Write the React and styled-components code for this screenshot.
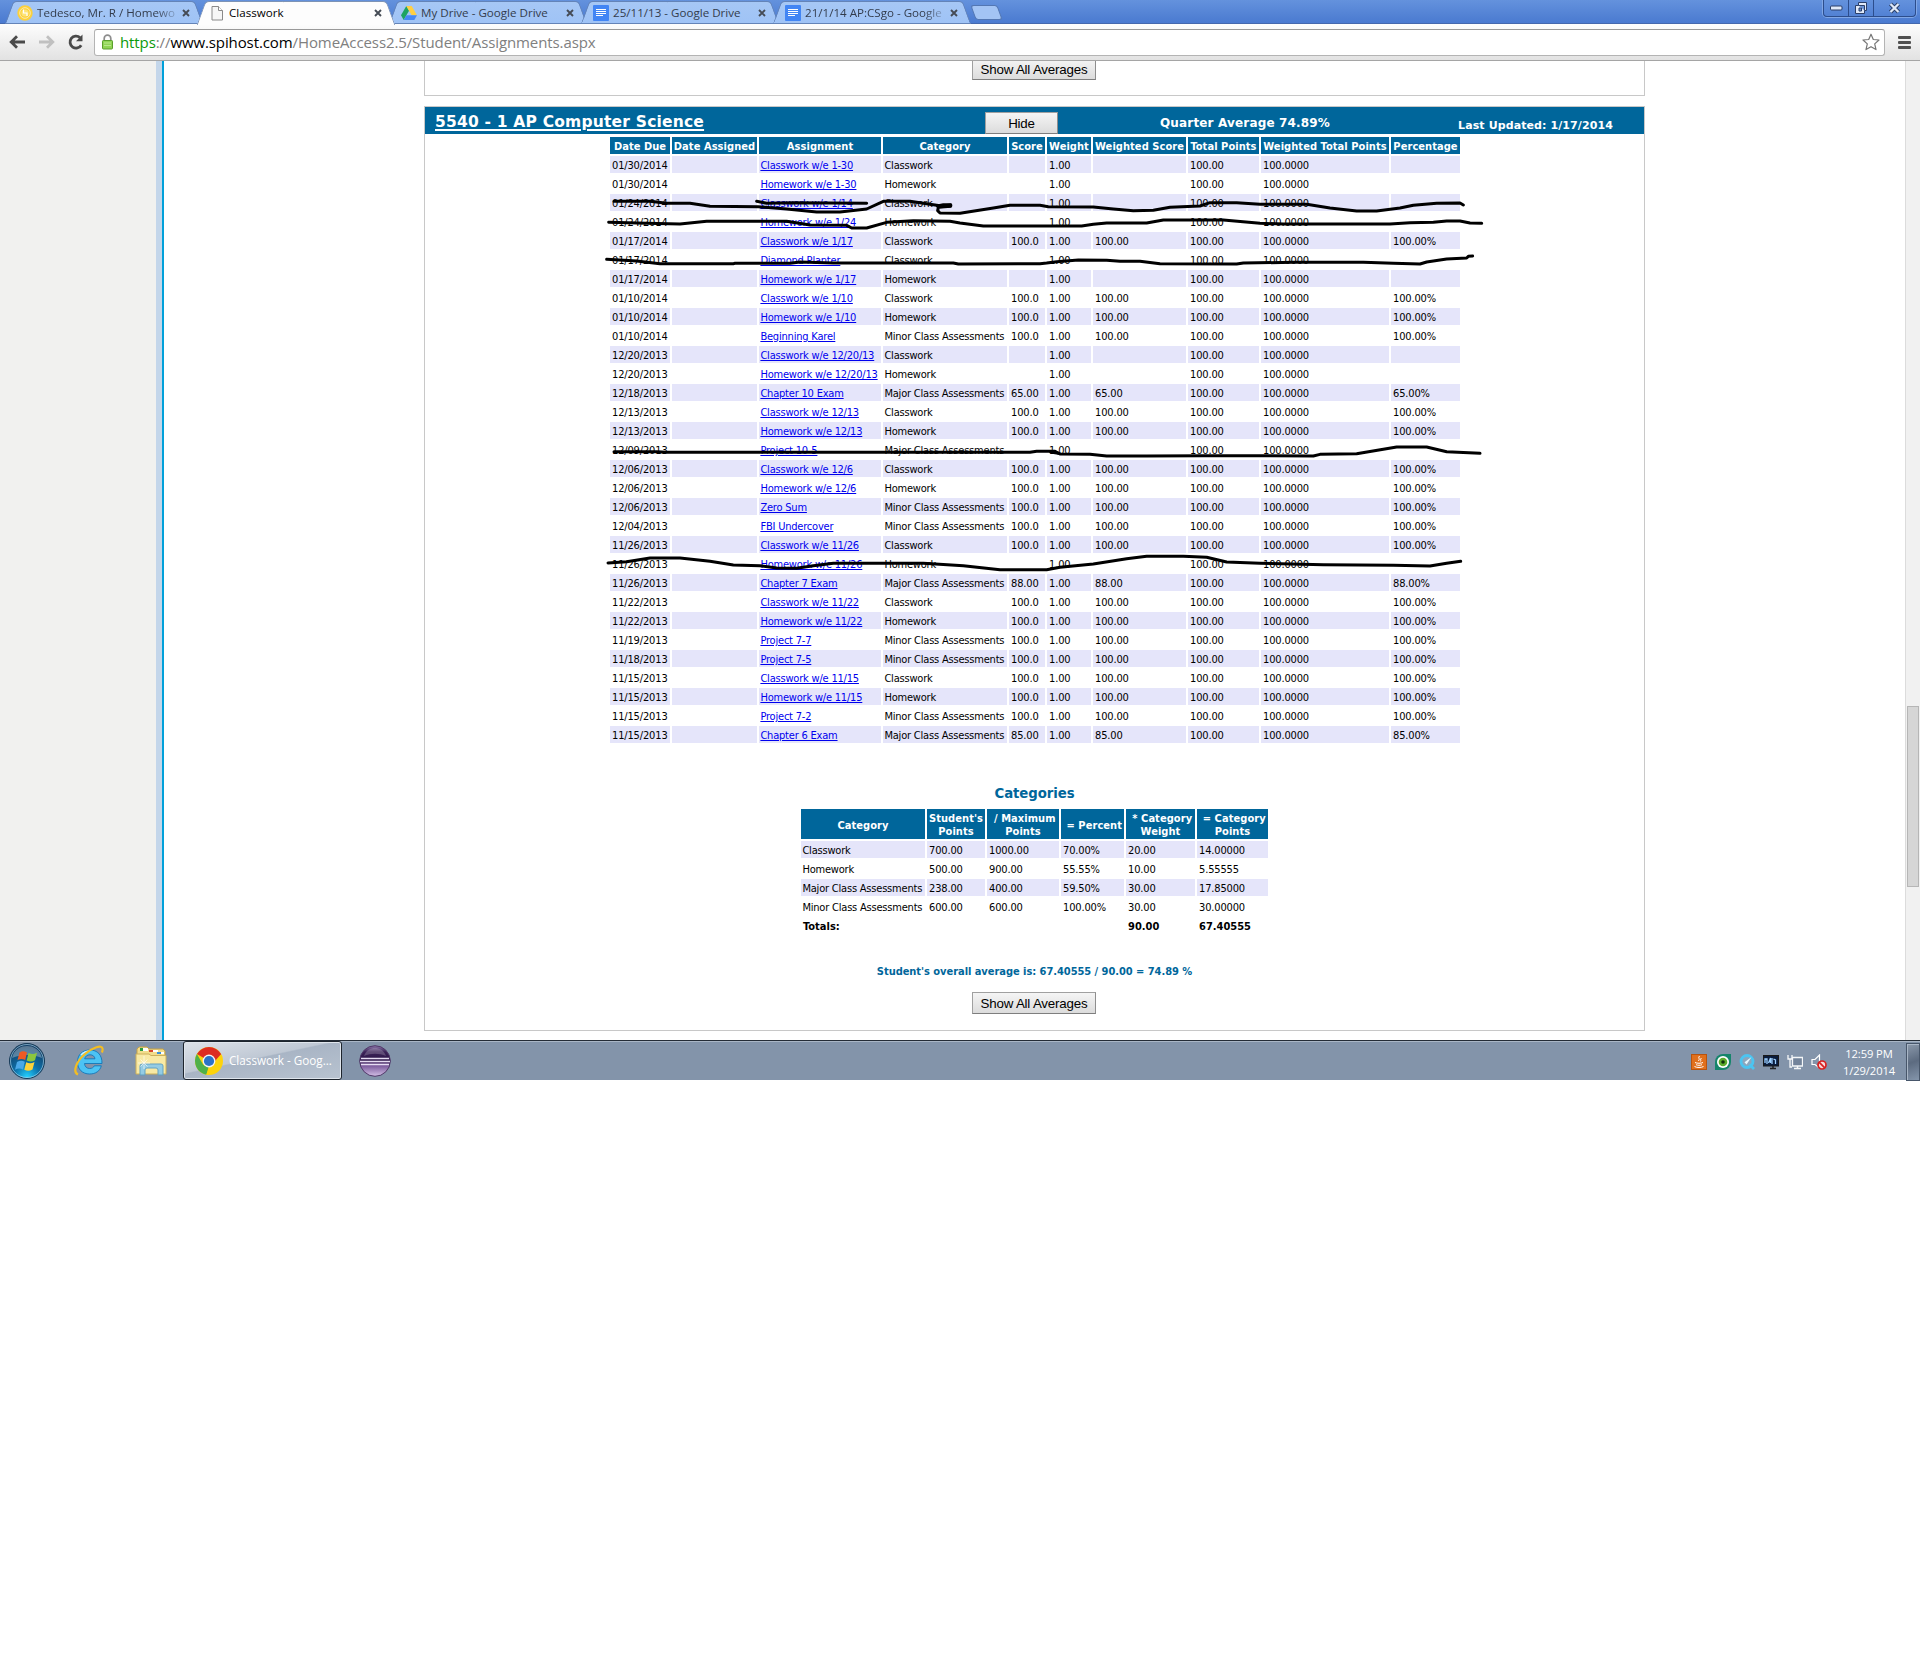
import React from "react";
import styled, { createGlobalStyle, css } from "styled-components";

const TAHOMA = `"DejaVu Sans Condensed", "DejaVu Sans", sans-serif`;
const WIDE = `"DejaVu Sans", sans-serif`;
const SEGOE = `"Open Sans", "Noto Sans", sans-serif`;
const ARIAL = `"Liberation Sans", Arial, sans-serif`;
const BLUE = "#00669b";

const GlobalStyle = createGlobalStyle`
  *, *::before, *::after { box-sizing: border-box; }
  body { margin: 0; background: #fff; font-family: ${TAHOMA}; }
`;

const Page = styled.div`
  width: 1920px;
  height: 1654px;
  overflow: hidden;
  background: #fff;
`;

const Desktop = styled.div`
  width: 1920px;
  height: 1080px;
  display: flex;
  flex-direction: column;
`;

/* ---------- browser frame ---------- */

const TabStrip = styled.div`
  position: relative;
  height: 24px;
  flex: none;
  display: flex;
  justify-content: space-between;
  padding-left: 4px;
  background: linear-gradient(#6492dd, #4a7ad0);
  border-bottom: 1px solid #4468ad;
`;

const Tabs = styled.div`
  display: flex;
  height: 24px;
  padding-top: 1px;
`;

const Tab = styled.div`
  position: relative;
  z-index: ${(p) => (p.$active ? 2 : 1)};
  display: flex;
  align-items: center;
  width: 200px;
  height: 23px;
  margin-right: -8px;
  padding: 0 14px 0 13px;
  font: 11.6px/23px ${SEGOE};
  color: ${(p) => (p.$active ? "#000" : "#333c4c")};
  --fill: ${(p) => (p.$active ? "#fdfdfd" : "linear-gradient(#a6c7f5, #9fc3f6)")};
  --edge: ${(p) => (p.$active ? "#7d93b5" : "#6484b8")};

  &::before,
  &::after {
    content: "";
    position: absolute;
    z-index: -1;
    top: 0;
    bottom: ${(p) => (p.$active ? "-1px" : "0")};
    background: var(--fill);
    border-top: 1px solid var(--edge);
    border-bottom: ${(p) => (p.$active ? "0" : "1px solid #6484b8")};
  }
  &::before {
    left: 5px;
    width: 50%;
    border-left: 1px solid var(--edge);
    border-top-left-radius: 4px;
    transform: skewX(-20deg);
  }
  &::after {
    right: 5px;
    width: 52%;
    border-right: 1px solid var(--edge);
    border-top-right-radius: 4px;
    transform: skewX(20deg);
  }
`;

const TabLabel = styled.span`
  flex: 1;
  margin-left: 4px;
  white-space: nowrap;
  padding-bottom: 1px;
  ${(p) => p.$fade && css`mask-image: linear-gradient(to right, #000 86%, rgba(0, 0, 0, 0.25));`}
`;

const Close = styled.svg`
  flex: none;
  width: 8px;
  height: 8px;
  margin-left: 7px;
`;

const NewTab = styled.div`
  width: 27px;
  height: 15px;
  margin: 4px 0 0 9px;
  border: 1px solid #5377b3;
  border-radius: 3px;
  background: #a3c4f4;
  transform: skewX(20deg);
`;

const WindowButtons = styled.div`
  display: flex;
  width: 93px;
  height: 17px;
  margin-right: 4px;
  border: 1px solid #2c4d8c;
  border-top: 0;
  border-radius: 0 0 4px 4px;
  box-shadow: 0 0 0 1px #81a7e6;
`;

const WindowButton = styled.div`
  flex: ${(p) => p.$w} 0 0;
  display: flex;
  align-items: center;
  justify-content: center;
  & + & { border-left: 1px solid #2c4d8c; }
`;

const Toolbar = styled.div`
  height: 37px;
  flex: none;
  display: flex;
  align-items: center;
  padding: 0 9px 0 8px;
  background: linear-gradient(#fdfdfd, #e2e2e2);
  border-bottom: 1px solid #a5a5a5;
`;

const NavIcon = styled.svg`
  flex: none;
  width: 18px;
  height: 18px;
  margin-right: ${(p) => p.$gap}px;
`;

const Omnibox = styled.div`
  flex: none;
  display: flex;
  align-items: center;
  width: 1791px;
  height: 27px;
  padding: 0 4px 0 6px;
  background: #fff;
  border: 1px solid #b4b4b4;
  border-top-color: #999;
  border-radius: 3px;
`;

const Url = styled.div`
  flex: 1;
  margin-left: 6px;
  font: 15px/24px ${SEGOE};
  letter-spacing: -0.1px;
  color: #808080;
  b { font-weight: 400; color: #000; }
  i { font-style: normal; color: #0b9a0b; }
`;

const Menu = styled.div`
  flex: none;
  display: flex;
  flex-direction: column;
  gap: 2px;
  margin-left: 13px;
`;

const MenuBar = styled.div`
  width: 13px;
  height: 3px;
  border-radius: 1px;
  background: #505050;
`;

/* ---------- web page ---------- */

const Viewport = styled.div`
  position: relative;
  height: 979px;
  flex: none;
  display: flex;
  overflow: hidden;
  background: #fff;
`;

const SideRail = styled.div`
  width: 164px;
  flex: none;
  background: #f1f1ef;
  border-right: 2px solid #00a0da;
  box-shadow: inset -6px 0 #c4d6ea;
`;

const Content = styled.div`
  width: 1741px;
  flex: none;
  padding-left: 260px;
`;

const ScrollTrack = styled.div`
  width: 15px;
  flex: none;
  padding-top: 645px;
  background: #f1f1f1;
  border-left: 1px solid #dcdcdc;
`;

const ScrollThumb = styled.div`
  height: 181px;
  margin: 0 1px;
  background: #d6d6d6;
  border: 1px solid #b6b6b6;
`;

const Panel = styled.section`
  width: 1221px;
  height: ${(p) => p.$h}px;
  margin-bottom: ${(p) => p.$gap || 0}px;
  border: 1px solid #c8c8c8;
  ${(p) => p.$cut && css`border-top: 0;`}
  display: flex;
  flex-direction: column;
`;

const Button = styled.button`
  width: ${(p) => p.$w}px;
  height: 22px;
  padding: 1px 0 0;
  border: 1px solid #a0a0a0;
  border-bottom-color: #7e7e7e;
  border-right-color: #8e8e8e;
  background: linear-gradient(#f5f5f5, #dcdcdc);
  font: 13.33px/18px ${ARIAL};
  letter-spacing: -0.2px;
  color: #000;
  align-self: center;
  margin: ${(p) => p.$m || "0"};
`;

const CourseBar = styled.header`
  display: grid;
  grid-template-columns: 560px 73px 1fr auto;
  height: 27px;
  flex: none;
  padding: 0 31px 0 0;
  background: ${BLUE};
  color: #fff;
  font-family: ${WIDE};
  font-weight: 700;
  & > ${Button} { align-self: start; }
`;

const CourseTitle = styled.a`
  padding-left: 10px;
  font-size: 15.5px;
  line-height: 31px;
  letter-spacing: 0.2px;
  text-decoration: underline;
  text-decoration-thickness: 2px;
  text-underline-offset: 2px;
`;

const Quarter = styled.span`
  padding-left: 102px;
  font-size: 12px;
  line-height: 33px;
  letter-spacing: 0.16px;
`;

const Updated = styled.span`
  font-size: 11px;
  line-height: 37px;
  letter-spacing: 0.1px;
`;

const Grid = styled.table`
  table-layout: fixed;
  width: ${(p) => p.$w}px;
  flex: none;
  margin: ${(p) => p.$m};
  border-spacing: 2px;
  font-size: 11px;
  color: #000;
`;

const Th = styled.th`
  height: ${(p) => p.$h}px;
  padding: 2px 0 0;
  background: ${BLUE};
  color: #fff;
  font-weight: 700;
  line-height: 13px;
  letter-spacing: 0.06px;
  text-align: center;
  white-space: pre;
`;

const Row = styled.tr`
  background: ${(p) => (p.$shade ? "#e5e5fa" : "#fff")};
`;

const Td = styled.td`
  height: 17px;
  padding: 3px 0 0 ${(p) => (p.$text ? 1.4 : 2)}px;
  line-height: 14px;
  letter-spacing: ${(p) => (p.$text ? "-0.2px" : p.$bold ? "0" : "-0.15px")};
  white-space: nowrap;
  font-weight: ${(p) => (p.$bold ? 700 : 400)};
`;

const AssignmentLink = styled.a`
  color: #0000ee;
  text-decoration: underline;
  text-underline-offset: 1px;
`;

const SectionTitle = styled.h3`
  margin: 39px 0 0;
  font-family: ${WIDE};
  font-size: 13.300px;
  line-height: 20px;
  letter-spacing: -0.08px;
  text-align: center;
  color: ${BLUE};
`;

const Overall = styled.p`
  margin: 28px 0 0;
  font-size: 11px;
  font-weight: 700;
  line-height: 16px;
  letter-spacing: -0.04px;
  text-align: center;
  color: ${BLUE};
`;

const Ink = styled.svg`
  position: absolute;
  left: 600px;
  top: 129px;
  width: 900px;
  height: 390px;
  pointer-events: none;
`;

/* ---------- taskbar ---------- */

const Taskbar = styled.div`
  height: 40px;
  flex: none;
  display: flex;
  align-items: center;
  background: #8394aa;
  border-top: 1px solid #242c36;
  box-shadow: inset 0 1px #a9b6c6;
`;

const Launcher = styled.svg`
  flex: none;
  width: ${(p) => p.$s}px;
  height: ${(p) => p.$s}px;
  margin-left: ${(p) => p.$gap}px;
`;

const TaskButton = styled.div`
  display: flex;
  align-items: center;
  flex: none;
  width: 159px;
  height: 39px;
  margin-left: 16px;
  padding-left: 11px;
  border: 1px solid #1d242d;
  border-radius: 3px;
  background: linear-gradient(168deg, #dde2e9 0%, #bfc8d4 44%, #a9b5c5 46%, #b8c3d0 100%);
  box-shadow: inset 0 0 0 1px #dfe5ec;
  font: 11.7px/20px ${SEGOE};
  color: #fff;
  white-space: nowrap;
`;

const TaskLabel = styled.span`
  margin: 0 0 2px 6px;
`;

const Tray = styled.div`
  display: flex;
  align-items: center;
  gap: 8px;
  margin-left: auto;
  padding-top: 2px;
`;

const TrayIcon = styled.svg`
  flex: none;
  width: 16px;
  height: 16px;
`;

const Clock = styled.div`
  width: 68px;
  margin-right: -5px;
  font: 11.200px/17px ${SEGOE};
  letter-spacing: -0.1px;
  text-align: center;
  color: #fff;
`;

const ShowDesktop = styled.div`
  width: 14px;
  height: 38px;
  border: 1px solid #47566a;
  background: linear-gradient(160deg, #8b99ab, #5c6b80 50%, #8495ab);
  box-shadow: inset 1px 1px #a9b6c6;
`;

/* ---------- data ---------- */

const CW = "Classwork";
const HW = "Homework";
const MAJ = "Major Class Assessments";
const MIN = "Minor Class Assessments";

const assignments = [
  ["01/30/2014", "Classwork w/e 1-30", CW],
  ["01/30/2014", "Homework w/e 1-30", HW],
  ["01/24/2014", "Classwork w/e 1/14", CW],
  ["01/24/2014", "Homework w/e 1/24", HW],
  ["01/17/2014", "Classwork w/e 1/17", CW, 100],
  ["01/17/2014", "Diamond Planter", CW],
  ["01/17/2014", "Homework w/e 1/17", HW],
  ["01/10/2014", "Classwork w/e 1/10", CW, 100],
  ["01/10/2014", "Homework w/e 1/10", HW, 100],
  ["01/10/2014", "Beginning Karel", MIN, 100],
  ["12/20/2013", "Classwork w/e 12/20/13", CW],
  ["12/20/2013", "Homework w/e 12/20/13", HW],
  ["12/18/2013", "Chapter 10 Exam", MAJ, 65],
  ["12/13/2013", "Classwork w/e 12/13", CW, 100],
  ["12/13/2013", "Homework w/e 12/13", HW, 100],
  ["12/09/2013", "Project 10-5", MAJ],
  ["12/06/2013", "Classwork w/e 12/6", CW, 100],
  ["12/06/2013", "Homework w/e 12/6", HW, 100],
  ["12/06/2013", "Zero Sum", MIN, 100],
  ["12/04/2013", "FBI Undercover", MIN, 100],
  ["11/26/2013", "Classwork w/e 11/26", CW, 100],
  ["11/26/2013", "Homework w/e 11/26", HW],
  ["11/26/2013", "Chapter 7 Exam", MAJ, 88],
  ["11/22/2013", "Classwork w/e 11/22", CW, 100],
  ["11/22/2013", "Homework w/e 11/22", HW, 100],
  ["11/19/2013", "Project 7-7", MIN, 100],
  ["11/18/2013", "Project 7-5", MIN, 100],
  ["11/15/2013", "Classwork w/e 11/15", CW, 100],
  ["11/15/2013", "Homework w/e 11/15", HW, 100],
  ["11/15/2013", "Project 7-2", MIN, 100],
  ["11/15/2013", "Chapter 6 Exam", MAJ, 85],
];

const columns = [
  ["Date Due", 60], ["Date Assigned", 85], ["Assignment", 122], ["Category", 124],
  ["Score", 36], ["Weight", 44], ["Weighted Score", 93], ["Total Points", 71],
  ["Weighted Total Points", 128], ["Percentage", 69],
];

const categoryColumns = [
  ["Category", 124], ["Student's\nPoints", 58], [" / Maximum\nPoints", 72],
  [" = Percent", 63], [" * Category\nWeight", 69], [" = Category\nPoints", 71],
];

const categories = [
  [CW, "700.00", "1000.00", "70.00%", "20.00", "14.00000"],
  [HW, "500.00", "900.00", "55.55%", "10.00", "5.55555"],
  [MAJ, "238.00", "400.00", "59.50%", "30.00", "17.85000"],
  [MIN, "600.00", "600.00", "100.00%", "30.00", "30.00000"],
];

/* Pen strokes, three units to the pixel. */
const strokes = [
  "42,32 150,32 200,38 270,38 330,47 475,48 560,55 650,64 720,64 800,55 850,32 930,32 1000,42 1025,46 1052,43 1052,47 1015,50 1013,60 1020,67 1080,68 1180,52 1230,44 1320,44 1345,48 1480,49 1540,55 1600,60 1660,59 1710,50 1800,46 1830,36 1910,36 1980,41 2120,41 2190,52 2270,61 2330,61 2400,52 2440,44 2510,38 2580,37 2590,43",
  "1012,46 1030,42 1052,42 1052,46 1018,48",
  "470,32 500,38 580,36 800,38",
  "26,95 140,98 240,100 320,92 560,92 630,103 740,104 755,112 800,112 860,95 940,90 1050,92 1080,97 1150,106 1445,106 1480,101 1520,97 1640,97 1690,88 1870,88 1980,98 2050,100 2370,100 2430,96 2500,95 2540,91 2580,91 2610,97 2645,98",
  "20,206 110,211 180,219 400,219 405,218 570,218 600,214 700,217 1060,217 1075,220 1320,219 1340,217 1370,213 1435,208 1520,209 1560,212 1620,212 1680,219 1910,220 1930,217 2080,215 2290,215 2380,218 2460,220 2480,214 2540,205 2600,202 2605,197 2618,196",
  "42,783 170,783 200,785 1290,785 1310,782 1365,782 1380,790 1470,791 1520,796 1640,796 1810,795 2140,796 2160,791 2270,789 2390,769 2480,769 2540,783 2640,788",
  "1352,784 1375,788",
  "24,1117 80,1113 150,1102 240,1102 330,1112 400,1123 480,1125 530,1132 590,1133 640,1125 700,1118 970,1118 1090,1125 1200,1137 1340,1137 1380,1130 1480,1120 1580,1104 1640,1097 1750,1097 1820,1100 1880,1114 1980,1118 2170,1122 2380,1124 2490,1126 2540,1118 2582,1112",
];

/* ---------- icons ---------- */

const SunIcon = () => (
  <TrayIcon viewBox="0 0 16 16">
    <circle cx="8" cy="8" r="7.700" fill="#fbd03c" />
    <circle cx="8" cy="8" r="5.300" fill="none" stroke="#fff" strokeWidth=".8" opacity=".7" />
    <circle cx="8" cy="8" r="3.600" fill="#fde478" />
    <path d="M6.500 4.500v3.500h3.500v3" stroke="#fff" strokeWidth="1.200" fill="none" />
  </TrayIcon>
);

const FileIcon = () => (
  <TrayIcon viewBox="0 0 16 16">
    <path d="M3 1.500h6.500l4 4v9.500H3z" fill="#f6f6f6" stroke="#8a8a8a" />
    <path d="M9.500 1.500v4h4" fill="#fff" stroke="#8a8a8a" />
  </TrayIcon>
);

const DriveIcon = () => (
  <TrayIcon viewBox="0 0 16 16">
    <path d="M5.300 1 0 10.200 2.700 15 8 5.800z" fill="#1da362" />
    <path d="M5.300 1h5.400L16 10.200h-5.300z" fill="#ffcf44" />
    <path d="M2.700 15 5.400 10.200H16L13.300 15z" fill="#4688f4" />
  </TrayIcon>
);

const DocIcon = () => (
  <TrayIcon viewBox="0 0 16 16">
    <rect width="16" height="16" rx="1" fill="#4285f4" />
    <path d="M3 4.500h10M3 6.500h10M3 8.500h10M3 10.500h7" stroke="#fff" />
  </TrayIcon>
);

const TabClose = () => (
  <Close viewBox="0 0 8 8">
    <path d="M1 1l6 6M7 1L1 7" stroke="#454b55" strokeWidth="1.900" />
  </Close>
);

const LockIcon = () => (
  <NavIcon viewBox="0 0 18 18" $gap={-5}>
    <path d="M3.200 8V5.500a3.300 3.300 0 0 1 6.600 0V8" fill="none" stroke="#8d8d8d" strokeWidth="1.700" />
    <rect x="1.500" y="7.500" width="10" height="8.500" rx=".8" fill="#8fd454" stroke="#5a9e2c" />
    <path d="M3 10h7M3 12.500h7" stroke="#b8e88c" />
  </NavIcon>
);

const StartOrb = () => (
  <Launcher viewBox="0 0 38 38" $s={38} $gap={8}>
    <defs>
      <radialGradient id="orb" cx=".5" cy=".95" r=".85">
        <stop offset="0" stopColor="#22d0ff" />
        <stop offset=".45" stopColor="#0d6fa8" />
        <stop offset="1" stopColor="#143f66" />
      </radialGradient>
    </defs>
    <circle cx="19" cy="19" r="17.500" fill="url(#orb)" stroke="#173a57" />
    <circle cx="19" cy="19" r="16.500" fill="none" stroke="#a9d3ea" opacity=".65" />
    <path d="M4 16C6 7 13 4 19 4s13 3 15 12c-9-4-21-4-30 0z" fill="#fff" opacity=".3" />
    <path d="M11.500 10.500c3-1.800 5-1.300 7.500 0l-1.800 7.500c-2.500-1.300-4.700-1.500-7.700 0z" fill="#ee5a24" />
    <path d="M20.500 11c3 1.300 5 1.500 8.500-.3l-2 7.500c-3 1.600-5.300 1.500-8.300.2z" fill="#8cc63e" />
    <path d="M9 20c3-1.600 5.200-1.500 7.800-.2L15 27.500c-2.500-1.300-5-1.500-8 .2z" fill="#4aa8e8" />
    <path d="M18.200 20.200c3 1.500 5.300 1.300 8.300-.2l-2 7.500c-3 1.700-5.500 1.500-8.200.3z" fill="#fdd23a" />
  </Launcher>
);

const ExplorerIcon = () => (
  <Launcher viewBox="0 0 32 32" $s={32} $gap={27}>
    <path d="M29 18.500H11.500c.3 3.300 2.300 5 5.200 5 2.200 0 3.800-.9 4.600-2.700h7c-1.300 5.300-5.700 8.200-11.700 8.200C9.500 29 4.500 24.300 4.500 17S9.500 5 16.800 5C24.700 5 29.200 10.200 29 18.500zM22 13.800c-.4-2.500-2.200-4-5-4s-4.700 1.500-5.300 4z" fill="#4cc3f4" stroke="#1476b8" strokeWidth=".9" />
    <path d="M8 10c3-3 6-4 9-4" stroke="#c8f0ff" strokeWidth="1.500" fill="none" />
    <path d="M5 29.500C-.5 27 3 16.500 12 9 20 2.500 28.500-.5 29.500 3.500c.3 1.300 0 2.500-.6 4" fill="none" stroke="#f3bd22" strokeWidth="2.200" />
  </Launcher>
);

const FolderIcon = () => (
  <Launcher viewBox="0 0 32 32" $s={32} $gap={30}>
    <path d="M2 4l2-2h8l2 2h14l2 2v20H2z" fill="#f2dd8c" stroke="#c5a247" />
    <path d="M5 3h3v3H5z" fill="#2a9d3f" />
    <path d="M8 3h5v3H8zM18 5h5v2h-5zM25 7h4v2h-4z" fill="#fff" />
    <path d="M14 5h4v2h-4z" fill="#d9482b" />
    <path d="M22 7h4v2h-4z" fill="#3a90d8" />
    <path d="M1 9h13l2 1.500h15V29H1z" fill="#f8e9a4" stroke="#cdb05a" />
    <path d="M5 30V21q0-2 2-2h19q2 0 2 2v9h-5v-5q0-2-2-2h-9q-2 0-2 2v5z" fill="#8fcbe8" stroke="#5c9fc4" opacity=".95" />
    <path d="M9 11v13M3 18h12M5.500 14.500l7 7M12.500 14.500l-7 7" stroke="#fff" strokeWidth=".8" opacity=".8" />
  </Launcher>
);

const ChromeIcon = () => (
  <Launcher viewBox="0 0 28 28" $s={28} $gap={0}>
    <circle cx="14" cy="14" r="14" fill="#fdd30b" />
    <path d="M14 14 1.900 7A14 14 0 0 1 26.100 7z" fill="#dd2c22" />
    <path d="M1.900 7 8.200 17.800 14 20 11.500 27.800A14 14 0 0 1 1.900 7z" fill="#4fb04a" />
    <path d="M14 7h12.100L20 14z" fill="#dd2c22" />
    <path d="M19.800 17.500 13.700 28h-2.500L14 19z" fill="#fdd30b" />
    <circle cx="14" cy="14" r="6.400" fill="#f4f4f4" />
    <circle cx="14" cy="14" r="5.100" fill="#2b72c8" />
  </Launcher>
);

const EclipseIcon = () => (
  <Launcher viewBox="0 0 32 32" $s={32} $gap={17}>
    <defs>
      <linearGradient id="eclipse" x1="0" y1="0" x2="0" y2="1">
        <stop offset="0" stopColor="#8f79ad" />
        <stop offset=".2" stopColor="#3c2358" />
        <stop offset=".48" stopColor="#2c1547" />
        <stop offset=".65" stopColor="#7b5a9c" />
        <stop offset="1" stopColor="#d3c0e6" />
      </linearGradient>
    </defs>
    <circle cx="16" cy="16" r="15.300" fill="url(#eclipse)" stroke="#503868" />
    <path d="M2 13.500h28M1 16.500h30M2 19.500h28" stroke="#e6dcf2" strokeWidth="1.400" />
    <path d="M5 11C7 5 12 3 16 3s9 2 11 8c-7-3-15-3-22 0z" fill="#fff" opacity=".2" />
  </Launcher>
);

const tabs = [
  [SunIcon, "Tedesco, Mr. R / Homewo", false, true],
  [FileIcon, "Classwork", true, false],
  [DriveIcon, "My Drive - Google Drive", false, false],
  [DocIcon, "25/11/13 - Google Drive", false, false],
  [DocIcon, "21/1/14 AP:CSgo - Google", false, true],
];

function Browser() {
  return (
    <>
      <TabStrip>
        <Tabs>
          {tabs.map(([Icon, label, active, fade]) => (
            <Tab key={label} $active={active}>
              <Icon />
              <TabLabel $fade={fade}>{label}</TabLabel>
              <TabClose />
            </Tab>
          ))}
          <NewTab />
        </Tabs>
        <WindowButtons>
          <WindowButton $w={25}>
            <svg width="13" height="6" viewBox="0 0 13 6">
              <rect x=".5" y="1" width="11.500" height="4" rx="1" fill="#dfe9f9" stroke="#2b3f68" />
            </svg>
          </WindowButton>
          <WindowButton $w={25}>
            <svg width="14" height="14" viewBox="0 0 14 14">
              <path d="M4.500 1.500h8v8h-2v3h-9v-8h3z" fill="#dfe9f9" stroke="#2b3f68" />
              <path d="M4.500 4.500h6v5M5 7h2.500v3H5z" fill="#6a92d6" stroke="#2b3f68" />
            </svg>
          </WindowButton>
          <WindowButton $w={42}>
            <svg width="13" height="12" viewBox="0 0 13 12">
              <path d="M2.500 2l8 8M10.500 2l-8 8" stroke="#2b3f68" strokeWidth="4.200" />
              <path d="M2.500 2l8 8M10.500 2l-8 8" stroke="#dfe9f9" strokeWidth="2.300" />
            </svg>
          </WindowButton>
        </WindowButtons>
      </TabStrip>
      <Toolbar>
        <NavIcon viewBox="0 0 18 18" $gap={12}>
          <path d="M17 9H4M9 3.200 3.200 9 9 14.800" fill="none" stroke="#4a4a4a" strokeWidth="2.800" />
        </NavIcon>
        <NavIcon viewBox="0 0 18 18" $gap={11}>
          <path d="M1 9h13M9 3.200 14.800 9 9 14.800" fill="none" stroke="#c0c0c0" strokeWidth="2.800" />
        </NavIcon>
        <NavIcon viewBox="0 0 18 18" $gap={9}>
          <path d="M14.200 12.200A6 6 0 1 1 13 4.600" fill="none" stroke="#4a4a4a" strokeWidth="2.800" />
          <path d="M15.500 1.500v6.700H9z" fill="#4a4a4a" />
        </NavIcon>
        <Omnibox>
          <LockIcon />
          <Url><i>https</i>://<b>www.spihost.com</b>/HomeAccess2.5/Student/Assignments.aspx</Url>
          <NavIcon viewBox="0 0 18 18" $gap={0}>
            <path d="M9 1.200 11.300 6.500 17 7l-4.300 3.900 1.300 5.700L9 13.700 4 16.600l1.300-5.700L1 7l5.700-.5z" fill="#fff" stroke="#757575" strokeWidth="1.200" strokeLinejoin="round" />
          </NavIcon>
        </Omnibox>
        <Menu><MenuBar /><MenuBar /><MenuBar /></Menu>
      </Toolbar>
    </>
  );
}

const HeaderRow = ({ cols, height }) => (
  <>
    <colgroup>{cols.map(([name, w]) => <col key={name} width={w} />)}</colgroup>
    <thead>
      <tr>{cols.map(([name]) => <Th key={name} $h={height}>{name}</Th>)}</tr>
    </thead>
  </>
);

function Assignments() {
  return (
    <Grid $w={854} $m="1px 0 0 183px">
      <HeaderRow cols={columns} height={17} />
      <tbody>
        {assignments.map(([due, name, category, score], i) => (
          <Row key={i} $shade={i % 2 === 0}>
            <Td>{due}</Td>
            <Td />
            <Td $text><AssignmentLink>{name}</AssignmentLink></Td>
            <Td $text>{category}</Td>
            <Td>{score && (score === 100 ? "100.0" : score + ".00")}</Td>
            <Td>1.00</Td>
            <Td>{score && score + ".00"}</Td>
            <Td>100.00</Td>
            <Td>100.0000</Td>
            <Td>{score && score + ".00%"}</Td>
          </Row>
        ))}
      </tbody>
    </Grid>
  );
}

function Categories() {
  return (
    <Grid $w={471} $m="3px 0 0 374px">
      <HeaderRow cols={categoryColumns} height={30} />
      <tbody>
        {categories.map((cells, i) => (
          <Row key={cells[0]} $shade={i % 2 === 0}>
            {cells.map((c, j) => <Td key={j} $text={j === 0}>{c}</Td>)}
          </Row>
        ))}
        <Row>
          {["Totals:", "", "", "", "90.00", "67.40555"].map((c, j) => <Td key={j} $bold>{c}</Td>)}
        </Row>
      </tbody>
    </Grid>
  );
}

function TrayIcons() {
  return (
    <Tray>
      <TrayIcon viewBox="0 0 16 16">
        <rect x=".5" y=".5" width="15" height="15" fill="#e0701d" stroke="#b9540e" />
        <path d="M8.500 2c-2 2 1 2.500-1 5M10.500 4c-2 1.500 0 2-1 3.500M4 8.500c2 1 6 1 8 0M5 10.700c2 .8 4 .8 6 0M3.500 12.500c2 1.300 7 1.300 9 0" stroke="#fff" fill="none" />
      </TrayIcon>
      <TrayIcon viewBox="0 0 16 16">
        <path d="M0 8a8 8 0 0 1 8-8h8v8a8 8 0 0 1-8 8H0z" fill="#16856b" />
        <circle cx="8" cy="8" r="6" fill="#fff" />
        <circle cx="8" cy="8" r="4.300" fill="#5cab2c" />
        <circle cx="8" cy="8" r="1.800" fill="#10300c" />
      </TrayIcon>
      <TrayIcon viewBox="0 0 16 16">
        <circle cx="8" cy="7.500" r="6" fill="#8ba6bd" stroke="#4cc4f0" strokeWidth="2.800" />
        <path d="M12.500 3 5.500 8.200 7.500 10.500z" fill="#e6f7fd" />
        <path d="M10.500 10.500l4.500 4.500" stroke="#4cc4f0" strokeWidth="2.800" />
      </TrayIcon>
      <TrayIcon viewBox="0 0 16 16">
        <rect x=".5" y="1.500" width="15" height="10.500" fill="#0a1c3c" stroke="#1a1a1a" />
        <path d="M2 9V5h2v5M5.500 9l2-5v5M9 10V4M10.500 5l2 1v4" stroke="#9cd0ff" strokeWidth="1.300" fill="none" />
        <path d="M10 12v2M7 14.500h6" stroke="#222" strokeWidth="1.500" />
      </TrayIcon>
      <TrayIcon viewBox="0 0 16 16">
        <path d="M5.500 3.500h10v8.500h-10z" fill="#72839a" stroke="#f4f6f8" strokeWidth="1.300" />
        <path d="M7 14.500h7M10.500 12v2" stroke="#f4f6f8" strokeWidth="1.500" />
        <path d="M1 1v4h4V1M3 5v8h2" fill="none" stroke="#f4f6f8" strokeWidth="1.300" />
      </TrayIcon>
      <TrayIcon viewBox="0 0 16 16">
        <path d="M1 5.500h3L8.500 1v13L4 10.500H1z" fill="#8394aa" stroke="#fff" strokeWidth="1.200" />
        <circle cx="11" cy="11" r="4" fill="#f8dada" stroke="#d92020" strokeWidth="1.700" />
        <path d="M8.300 8.300l5.500 5.500" stroke="#d92020" strokeWidth="1.700" />
      </TrayIcon>
      <Clock>12:59 PM<br />1/29/2014</Clock>
      <ShowDesktop />
    </Tray>
  );
}

export default function App() {
  return (
    <Page>
      <GlobalStyle />
      <Desktop>
        <Browser />
        <Viewport>
          <SideRail />
          <Content>
            <Panel $h={35} $gap={10} $cut>
              <Button $w={124} $m="-3px 1px 0 0">Show All Averages</Button>
            </Panel>
            <Panel $h={925}>
              <CourseBar>
                <CourseTitle>5540 - 1 AP Computer Science</CourseTitle>
                <Button $w={73} $m="5px 0 0">Hide</Button>
                <Quarter>Quarter Average 74.89%</Quarter>
                <Updated>Last Updated: 1/17/2014</Updated>
              </CourseBar>
              <Assignments />
              <SectionTitle>Categories</SectionTitle>
              <Categories />
              <Overall>Student's overall average is: 67.40555 / 90.00 = 74.89 %</Overall>
              <Button $w={124} $m="12px 1px 0 0">Show All Averages</Button>
            </Panel>
          </Content>
          <ScrollTrack><ScrollThumb /></ScrollTrack>
          <Ink viewBox="0 -2 2700 1170">
            {strokes.map((points) => (
              <polyline key={points} points={points} fill="none" stroke="#000" strokeWidth="9" strokeLinecap="round" strokeLinejoin="round" />
            ))}
          </Ink>
        </Viewport>
        <Taskbar>
          <StartOrb />
          <ExplorerIcon />
          <FolderIcon />
          <TaskButton>
            <ChromeIcon />
            <TaskLabel>Classwork - Goog...</TaskLabel>
          </TaskButton>
          <EclipseIcon />
          <TrayIcons />
        </Taskbar>
      </Desktop>
    </Page>
  );
}
